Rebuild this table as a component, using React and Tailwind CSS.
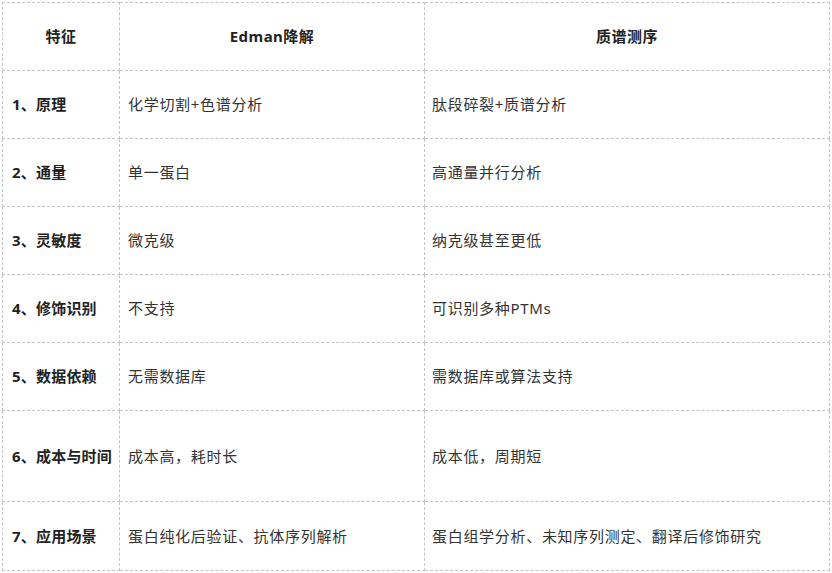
import React from 'react';

const rows = [
    { h: 'h-[68px]', f: '1、原理', a: '化学切割+色谱分析', b: '肽段碎裂+质谱分析' },
    { h: 'h-[68px]', f: '2、通量', a: '单一蛋白', b: '高通量并行分析' },
    { h: 'h-[68px]', f: '3、灵敏度', a: '微克级', b: '纳克级甚至更低' },
    { h: 'h-[68px]', f: '4、修饰识别', a: '不支持', b: '可识别多种PTMs' },
    { h: 'h-[68px]', f: '5、数据依赖', a: '无需数据库', b: '需数据库或算法支持' },
    { h: 'h-[91px]', f: '6、成本与时间', a: '成本高，耗时长', b: '成本低，周期短' },
    { h: 'h-[69px]', f: '7、应用场景', a: '蛋白纯化后验证、抗体序列解析', b: '蛋白组学分析、未知序列测定、翻译后修饰研究' },
];

const cell = 'border border-dashed border-[#c4c4c4]';

const App = () => {
    return (
        <div className="bg-white w-[832px] h-[573px] pt-[2px] pl-[2px] font-['Noto_Sans','Noto_Sans_CJK_SC',sans-serif] text-[15px]">
            <table className="border-collapse table-fixed w-[827px]">
                <colgroup>
                    <col className="w-[117px]" />
                    <col className="w-[305px]" />
                    <col className="w-[405px]" />
                </colgroup>
                <thead>
                    <tr className="h-[68px]">
                        <th className={`${cell} font-bold text-[#222] text-center tracking-[0.5px]`}>特征</th>
                        <th className={`${cell} font-bold text-[#222] text-center tracking-[0.5px]`}>Edman降解</th>
                        <th className={`${cell} font-bold text-[#222] text-center tracking-[0.5px]`}>质谱测序</th>
                    </tr>
                </thead>
                <tbody>
                    {rows.map((r) => (
                        <tr key={r.f} className={r.h}>
                            <td className={`${cell} pl-[9px] pr-0 font-bold text-[#222] whitespace-nowrap tracking-[0.2px]`}>{r.f}</td>
                            <td className={`${cell} pl-[8px] text-[#333] tracking-[0.7px]`}>{r.a}</td>
                            <td className={`${cell} pl-[7px] text-[#333] tracking-[0.7px]`}>{r.b}</td>
                        </tr>
                    ))}
                </tbody>
            </table>
        </div>
    );
};

export default App;
